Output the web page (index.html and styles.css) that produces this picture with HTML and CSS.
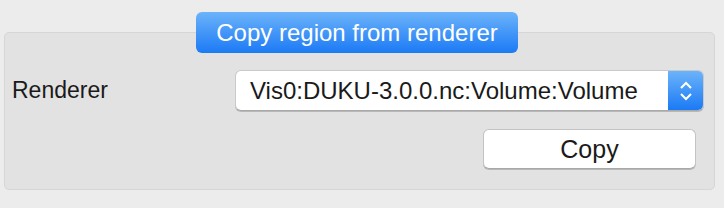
FILE: index.html
```html
<!DOCTYPE html>
<html lang="en">
<head>
  <meta charset="UTF-8" />
  <title>Copy region</title>
  <link rel="stylesheet" href="styles.css">
</head>
<body>

  <div class="panel">
    <div class="tab-row">
      <button class="tab">Copy region from renderer</button>
    </div>
    <div class="group">
      <div class="row">
        <span class="label">Renderer</span>
        <div class="select">
          <span class="select-text">Vis0:DUKU-3.0.0.nc:Volume:Volume</span>
          <span class="stepper">
            <svg width="14" height="24" viewBox="0 0 14 24">
              <path d="M2 9 L7 4 L12 9" fill="none" stroke="#fff" stroke-width="2"/>
              <path d="M2 15 L7 20 L12 15" fill="none" stroke="#fff" stroke-width="2"/>
            </svg>
          </span>
        </div>
      </div>
      <div class="row row-end">
        <button class="copy">Copy</button>
      </div>
    </div>
  </div>

</body>
</html>
```

FILE: styles.css
```css
* {
  box-sizing: border-box;
}

body {
  margin: 0;
  background: #ececec;
  font-family: 'Liberation Sans', Arial, sans-serif;
  font-size: 24px;
  color: #1a1a1a;
}

.panel {
  padding: 12px 9px 0 4px;
}

.tab-row {
  display: flex;
  justify-content: center;
  padding-right: 5px;
  position: relative;
  z-index: 1;
}

.tab {
  width: 322px;
  height: 41px;
  border: none;
  border-radius: 6px;
  background: linear-gradient(#6cb3fa, #1b7af5);
  color: #fff;
  font-family: inherit;
  font-size: 24px;
  padding: 0;
}

.group {
  margin-top: -21px;
  height: 158px;
  background: #e2e2e2;
  border: 1px solid #d6d6d6;
  border-radius: 5px;
  padding: 37px 10px 0 7px;
}

.row {
  display: flex;
  align-items: center;
}

.row-end {
  justify-content: flex-end;
  margin-top: 18px;
  padding-right: 8px;
}

.label {
  flex: 1;
  font-size: 23px;
}

.select {
  width: 469px;
  height: 41px;
  display: flex;
  background: #fff;
  border: 1px solid #c9c9c9;
  border-bottom-color: #a8a8a8;
  border-radius: 6px;
  box-shadow: 0 1px 0 #b8b8b8;
  overflow: hidden;
}

.select-text {
  flex: 1;
  padding-left: 14px;
  line-height: 39px;
}

.stepper {
  width: 35px;
  background: linear-gradient(#6cb3fa, #1b7af5);
  display: flex;
  align-items: center;
  justify-content: center;
}

.copy {
  width: 213px;
  height: 40px;
  background: #fff;
  border: 1px solid #c4c4c4;
  border-bottom-color: #a8a8a8;
  border-radius: 6px;
  box-shadow: 0 1px 0 #b8b8b8;
  font-family: inherit;
  font-size: 25px;
  color: #1a1a1a;
  padding: 0;
}
```
